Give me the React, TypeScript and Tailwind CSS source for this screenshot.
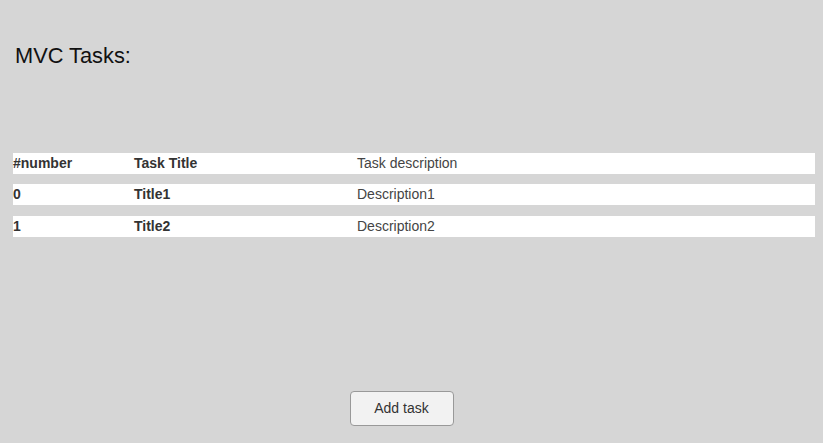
const tasks = [
  { id: 0, title: 'Title1', description: 'Description1', gap: 'mt-[10px]' },
  { id: 1, title: 'Title2', description: 'Description2', gap: 'mt-[11px]' },
]

export default function App() {
  return (
    <div className="w-[823px] h-[443px] bg-[#d6d6d6] font-['Liberation_Sans',Arial,sans-serif] text-[#333] flex flex-col">
      {/* Header */}
      <h1 className="ml-[15px] mt-[42px] text-[21.8px] leading-[28px] text-[#111]">MVC Tasks:</h1>

      {/* Task table */}
      <div className="mt-[83px] ml-[13px] w-[802px] flex flex-col text-[14px]">
        <div className="h-[21px] bg-white flex items-center">
          <span className="w-[121px] font-bold">#number</span>
          <span className="w-[223px] font-bold">Task Title</span>
          <span className="text-[#444]">Task description</span>
        </div>
        {tasks.map((t) => (
          <div key={t.id} className={`${t.gap} h-[21px] bg-white flex items-center`}>
            <span className="w-[121px] font-bold">{t.id}</span>
            <span className="w-[223px] font-bold">{t.title}</span>
            <span className="text-[#444]">{t.description}</span>
          </div>
        ))}
      </div>

      {/* Footer */}
      <div className="mt-auto mb-[17px] flex justify-center pr-[20px]">
        <button className="w-[104px] h-[35px] rounded-[4px] border border-[#999] bg-[#f2f2f2] text-[14px] text-[#333]">
          Add task
        </button>
      </div>
    </div>
  )
}
